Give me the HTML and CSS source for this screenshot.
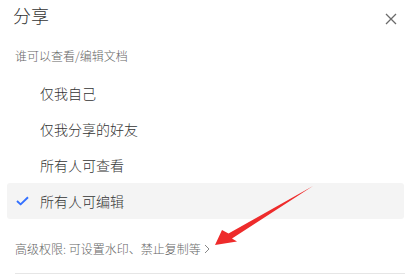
FILE: index.html
```html
<!DOCTYPE html>
<html lang="zh-CN">
<head>
<meta charset="utf-8">
<link rel="stylesheet" href="styles.css">
</head>
<body>
<div class="panel">
  <div class="header">
    <div class="title">分享</div>
    <svg class="close" width="12" height="12" viewBox="0 0 12 12"><path d="M1 1 L11 11 M11 1 L1 11" stroke="#6b6b6b" stroke-width="1.3" fill="none"/></svg>
  </div>
  <div class="subtitle">谁可以查看/编辑文档</div>
  <ul class="options">
    <li class="option">仅我自己</li>
    <li class="option">仅我分享的好友</li>
    <li class="option">所有人可查看</li>
    <li class="option selected">
      <svg class="check" width="13" height="10" viewBox="0 0 13 10"><path d="M1 5 L4.6 8.4 L12 1.2" stroke="#3370ff" stroke-width="1.9" fill="none" stroke-linejoin="round"/></svg>
      所有人可编辑
    </li>
  </ul>
  <div class="advanced">高级权限: 可设置水印、禁止复制等<svg class="chev" width="6" height="10" viewBox="0 0 6 10"><path d="M1 1 L5 5 L1 9" stroke="#888" stroke-width="1" fill="none"/></svg></div>
  <div class="divider"></div>
  <svg class="annot" width="418" height="280" viewBox="0 0 418 280"><polygon points="215,245 222,230 228.5,233.5 313,186 232,238.5 237,241.5" fill="#ee2b2b"/></svg>
</div>
</body>
</html>
```
FILE: styles.css
```css
* { box-sizing: border-box; }
html, body { margin: 0; padding: 0; background: #fff; }
body { font-family: "Noto Sans CJK SC", "Noto Sans", sans-serif; color: #333; font-weight: 300; }
.panel { position: relative; width: 418px; height: 280px; overflow: hidden; }
.header { display: flex; justify-content: space-between; align-items: flex-start; height: 30px; padding: 0 21px 0 13px; }
.title { font-size: 18px; line-height: 30px; color: #333; }
.close { margin-top: 13px; }
.subtitle { margin-top: 16px; padding-left: 15px; font-size: 12px; line-height: 20px; color: #666; }
.options { list-style: none; margin: 9px 14px 0 7px; padding: 0; }
.option { position: relative; height: 36px; line-height: 36px; padding-left: 33px; font-size: 14px; color: #333; border-radius: 3px; }
.option.selected { background: #f4f4f4; }
.check { position: absolute; left: 9px; top: 13px; }
.advanced { margin-top: 20px; padding-left: 15px; font-size: 12px; line-height: 20px; color: #666; display: flex; align-items: center; }
.chev { margin-left: 3px; }
.divider { margin: 14px 13px 0 15px; border-top: 1px solid #e6e6e6; }
.annot { position: absolute; left: 0; top: 0; pointer-events: none; }
```
